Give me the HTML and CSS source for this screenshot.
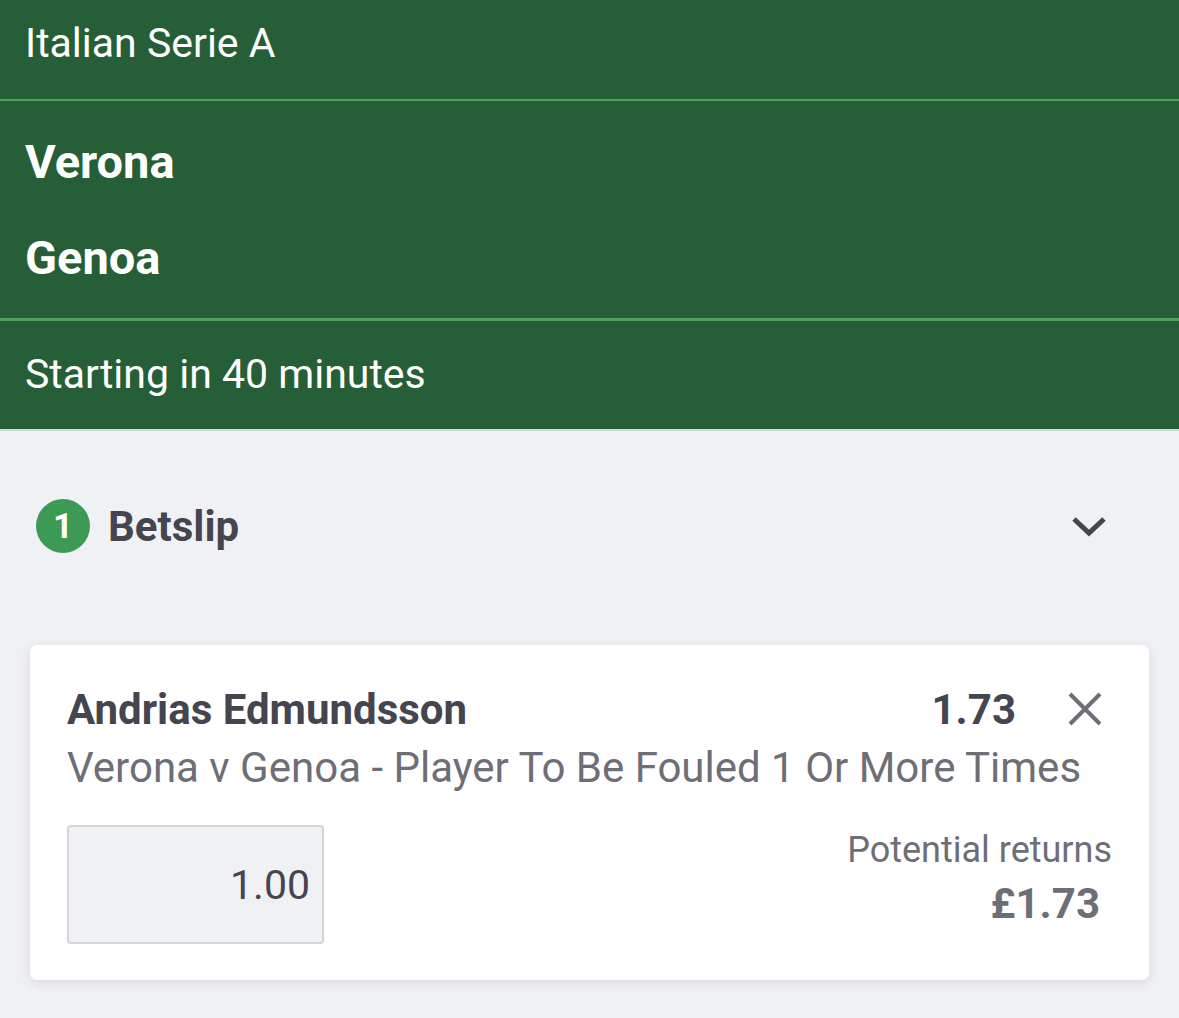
FILE: index.html
```html
<!DOCTYPE html>
<html>
<head>
<meta charset="utf-8">
<link rel="stylesheet" href="styles.css">
</head>
<body>
<header class="event">
  <div class="row league">Italian Serie A</div>
  <div class="row teams">
    <div class="team">Verona</div>
    <div class="team">Genoa</div>
  </div>
  <div class="row start">Starting in 40 minutes</div>
</header>
<section class="betslip">
  <div class="slip-head">
    <div class="slip-title">
      <span class="badge">1</span>
      <span class="title">Betslip</span>
    </div>
    <svg class="chev" width="36" height="24" viewBox="0 0 36 24"><path d="M3 5 L18 19 L33 5" fill="none" stroke="#45454f" stroke-width="5"/></svg>
  </div>
  <div class="card">
    <div class="card-top">
      <div class="sel">Andrias Edmundsson</div>
      <div class="odds">1.73</div>
      <svg class="close" width="34" height="34" viewBox="0 0 34 34"><path d="M2 2 L32 32 M32 2 L2 32" stroke="#6e6e76" stroke-width="4"/></svg>
    </div>
    <div class="market">Verona v Genoa - Player To Be Fouled 1 Or More Times</div>
    <div class="card-bottom">
      <div class="stake">1.00</div>
      <div class="returns">
        <div class="ret-label">Potential returns</div>
        <div class="ret-val">£1.73</div>
      </div>
    </div>
  </div>
</section>
</body>
</html>
```
FILE: styles.css
```css
* { box-sizing: border-box; }
html, body { margin: 0; padding: 0; }
body {
  font-family: Roboto, "Noto Sans", sans-serif;
  background: #f0f1f5;
  width: 1179px;
  height: 1018px;
  overflow: hidden;
}
.event {
  background: #265e37;
  color: #fff;
  border-bottom: 2px solid #d6d9dc;
}
.row { padding: 0 25px; }
.league {
  height: 101px;
  display: flex;
  align-items: center;
  font-size: 41px;
  padding-bottom: 14px;
  border-bottom: 2px solid #4aa35c;
}
.teams {
  height: 220px;
  border-bottom: 3px solid #4aa35c;
  display: flex;
  flex-direction: column;
  justify-content: center;
  gap: 30px;
}
.team {
  font-size: 47px;
  font-weight: 700;
  line-height: 66px;
}
.start {
  height: 108px;
  display: flex;
  align-items: center;
  font-size: 41px;
  padding-bottom: 2px;
}
.betslip { padding: 0 30px; }
.slip-head {
  height: 190px;
  display: flex;
  align-items: center;
  justify-content: space-between;
  padding: 0 42px 0 6px;
  margin-bottom: 24px;
}
.slip-title { display: flex; align-items: center; gap: 18px; }
.badge {
  width: 54px; height: 54px;
  border-radius: 50%;
  background: #3c9a55;
  color: #fff;
  font-weight: 700;
  font-size: 35px;
  display: flex; align-items: center; justify-content: center;
}
.title {
  font-size: 42px;
  font-weight: 700;
  color: #45454f;
}
.card {
  background: #fff;
  border-radius: 7px;
  box-shadow: 0 3px 12px rgba(0,0,0,0.10);
  height: 335px;
  padding: 36px 37px 0 37px;
}
.card-top {
  display: flex;
  align-items: center;
  height: 56px;
}
.sel {
  flex: 1;
  font-size: 42px;
  font-weight: 700;
  color: #45454f;
}
.odds {
  font-size: 42px;
  font-weight: 700;
  color: #45454f;
  margin-right: 52px;
}
.close { margin-right: 10px; }
.market {
  font-size: 42px;
  color: #6e6e76;
  line-height: 62px;
  white-space: nowrap;
}
.card-bottom {
  display: flex;
  justify-content: space-between;
  align-items: flex-start;
  margin-top: 26px;
}
.stake {
  width: 257px;
  height: 119px;
  background: #f0f1f5;
  border: 2px solid #d3d4d8;
  border-radius: 4px;
  display: flex;
  align-items: center;
  justify-content: flex-end;
  padding-right: 12px;
  font-size: 41px;
  color: #45454f;
}
.returns {
  text-align: right;
  padding-top: 2px;
}
.ret-label {
  font-size: 36px;
  color: #6e6e76;
  line-height: 46px;
}
.ret-val {
  font-size: 42px;
  font-weight: 700;
  color: #6e6e76;
  line-height: 62px;
  padding-right: 12px;
}
```
